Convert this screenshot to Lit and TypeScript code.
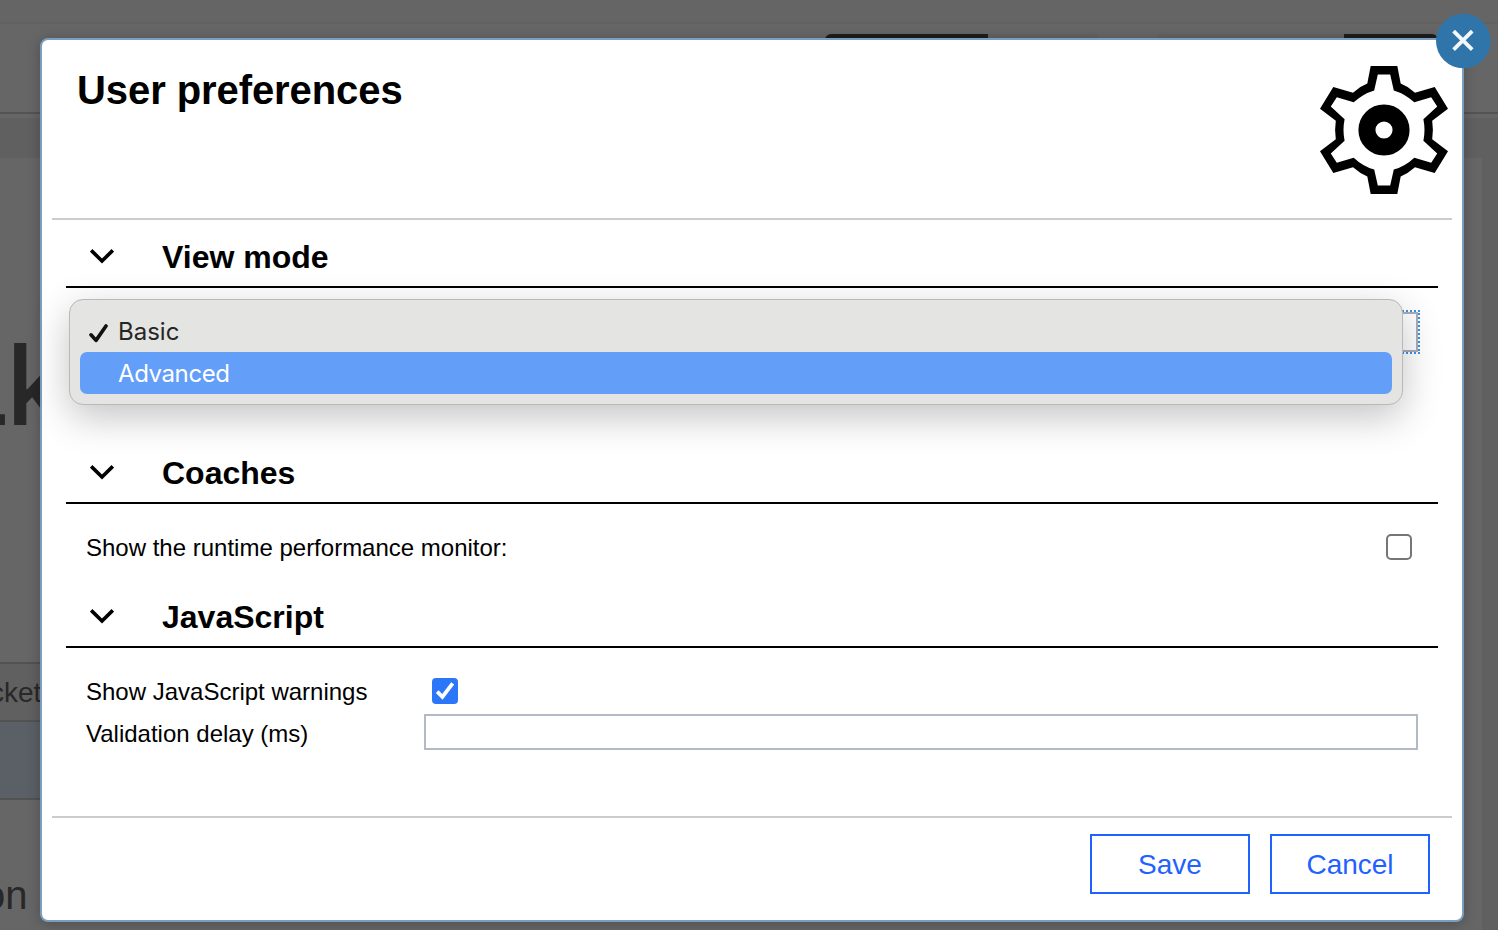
import { LitElement, html, css } from "lit";
import { customElement, property } from "lit/decorators.js";

@customElement("pref-section")
class PrefSection extends LitElement {
  @property() heading = "";

  static styles = css`
    :host { display: block; }
    .head {
      display: flex; align-items: center; box-sizing: border-box; height: 68px;
      margin: 0 24px; padding: 8px 0 0 24px; gap: 48px; border-bottom: 2px solid #000;
    }
    .chevron { width: 24px; height: 24px; display: block; margin-top: -2px; }
    .title { font: bold 32px/36px "Liberation Sans", Arial, sans-serif; letter-spacing: 0; margin: 0; color: #000; }
  `;

  render() {
    return html`
      <div class="head">
        <svg class="chevron" viewBox="0 0 24 24" fill="none" stroke="#000" stroke-width="3.6">
          <path d="M1.2 6.4 L12 17 L22.8 6.4" />
        </svg>
        <h2 class="title">${this.heading}</h2>
      </div>
      <slot></slot>
    `;
  }
}

@customElement("app-root")
class AppRoot extends LitElement {
  static styles = css`
    :host {
      display: grid; width: 1498px; height: 930px; overflow: hidden; position: relative;
      font-family: "Liberation Sans", Arial, sans-serif; color: #000; background: #666;
    }
    * { box-sizing: border-box; }
    .page, .dialog { grid-area: 1 / 1; }

    .page { display: flex; flex-direction: column; height: 930px; overflow: hidden; color: #282828; }
    .strip { height: 24px; flex: none; background: #656565; border-bottom: 2px solid #616161; }
    .toolbar { height: 90px; flex: none; display: flex; padding: 10px 0 0 825px; border-bottom: 2px solid #535358; }
    .tool { height: 30px; background: #1c1e1e; }
    .tool-a { width: 163px; border-radius: 6px 0 0 0; }
    .tool-b { width: 112px; background: #626262; border-radius: 0 6px 0 0; }
    .tool-c { width: 188px; margin-left: 56px; background: #626262; border-radius: 6px 0 0 0; }
    .tool-d { width: 94px; border-radius: 0 6px 0 0; }
    .band { height: 40px; flex: none; margin-top: 4px; background: #606060; }
    .main { flex: 1; display: flex; justify-content: space-between; }
    .left { width: 1400px; display: flex; flex-direction: column; }
    .gutter { width: 16px; background: #606060; }
    .hero { height: 504px; display: flex; padding-top: 167px; }
    .hero-text { font: 500 113px/118px Inter, sans-serif; letter-spacing: -4px; margin-left: -54px; white-space: nowrap; }
    .row-head {
      height: 60px; display: flex; align-items: center; background: #606060;
      border-top: 2px solid #525252; border-bottom: 2px solid #525252;
    }
    .row-text { font: 28px/36px "Liberation Sans", sans-serif; margin-left: -10px; padding-top: 1px; }
    .row-body { height: 78px; background: #5b6066; border-bottom: 2px solid #525252; }
    .tail { font: 40px/46px "Liberation Sans", sans-serif; margin: 72px 0 0 -17px; }

    .dialog {
      position: relative; z-index: 1; margin: 38px 0 0 40px; width: 1424px; height: 884px;
      background: #fff; border: 2px solid #7b9dbe; border-radius: 8px;
      box-shadow: 0 2px 14px rgba(0, 0, 0, 0.24);
      display: flex; flex-direction: column;
    }
    .header {
      height: 180px; flex: none; margin: 0 10px; padding: 26px 4px 0 25px;
      display: flex; justify-content: space-between; align-items: flex-start;
      border-bottom: 2px solid #ccc;
    }
    .heading { margin: 0; font-size: 40px; line-height: 48px; font-weight: bold; letter-spacing: -0.08px; }
    .gear { width: 128px; height: 128px; display: block; }

    .view-body { height: 148px; padding: 22px 42px 0 36px; }
    .select-ring { height: 44px; border: 2px dotted #3f92e0; }
    .select { height: 40px; border: 2px solid #a9aebb; background: #fff; }
    .coach-body { height: 76px; display: flex; justify-content: space-between; padding: 30px 50px 0 44px; }
    .js-body {
      height: 168px; display: grid; grid-template-columns: 338px 1fr; grid-auto-rows: 42px;
      padding: 24px 44px 0 44px;
    }
    .label { font-size: 24px; line-height: 28px; white-space: nowrap; }
    .js-body .label { padding-top: 6px; }
    .check { width: 26px; height: 26px; display: block; border: 2px solid #767676; border-radius: 5px; background: #fff; }
    .checked { width: 26px; height: 26px; display: block; margin: 6px 0 0 8px; }
    .field { height: 36px; border: 2px solid #b4b9c6; background: #fff; }

    .footer {
      flex: 1; margin: 0 10px; padding: 16px 22px 0 0; border-top: 2px solid #ccc;
      display: flex; justify-content: flex-end; align-items: flex-start; gap: 20px;
    }
    .btn {
      width: 160px; height: 60px; padding: 1px 0 0; border: 2px solid #1f62ff; background: #fff;
      color: #1f62ff; font: 28px/32px "Liberation Sans", Arial, sans-serif;
    }

    .close { position: absolute; z-index: 4; left: 1436px; top: 13px; width: 55px; height: 56px; }
    .menu {
      position: absolute; z-index: 3; left: 69px; top: 299px; width: 1334px; height: 106px;
      padding: 12px 10px 10px; border: 1px solid #b9b9b8; border-radius: 14px; background: #e4e4e2;
      box-shadow: 0 12px 38px rgba(0, 0, 0, 0.24);
      font-family: Inter, sans-serif; font-size: 24px; color: #262626;
    }
    .option { height: 42px; display: flex; align-items: center; padding-left: 8px; border-radius: 7px; }
    .option-basic { height: 40px; }
    .option-active { background: #639ef8; color: #fff; padding-top: 1px; letter-spacing: -0.4px; }
    .mark { width: 20px; height: 20px; margin: 2px 10px 0 0; flex: none; }
    .option-label { line-height: 30px; }
  `;

  render() {
    return html`
      <div class="page">
        <div class="strip"></div>
        <div class="toolbar">
          <div class="tool tool-a"></div><div class="tool tool-b"></div>
          <div class="tool tool-c"></div><div class="tool tool-d"></div>
        </div>
        <div class="band"></div>
        <div class="main">
          <div class="left">
            <div class="hero"><div class="hero-text">Lk</div></div>
            <div class="row-head"><span class="row-text">cket</span></div>
            <div class="row-body"></div>
            <div class="tail">on</div>
          </div>
          <div class="gutter"></div>
        </div>
      </div>

      <div class="dialog" role="dialog">
        <div class="header">
          <h1 class="heading">User preferences</h1>
          <svg class="gear" viewBox="0 0 32 32">
            <path fill-rule="evenodd" d="M12.67 0H19.33L20.17 4.4Q22 5.1 23.75 6.67L28.67 5.25L32 10.67L28.05 13.7Q28.4 16 28.05 18.3L32 21.33L28.67 26.75L23.75 25.33Q22 26.9 20.17 27.6L19.33 32H12.67L11.83 27.6Q10 26.9 8.25 25.33L3.33 26.75L0 21.33L3.95 18.3Q3.6 16 3.95 13.7L0 10.67L3.33 5.25L8.25 6.67Q10 5.1 11.83 4.4Z
              M14.45 2.1L13.55 6.1Q10.7 6.95 8.42 9.08L4.2 7.8L2.7 10.15L6.15 13.3Q5.6 16 6.15 18.7L2.7 21.85L4.2 24.2L8.42 22.92Q10.7 25.05 13.55 25.9L14.45 29.9H17.55L18.45 25.9Q21.3 25.05 23.58 22.92L27.8 24.2L29.3 21.85L25.85 18.7Q26.4 16 25.85 13.3L29.3 10.15L27.8 7.8L23.58 9.08Q21.3 6.95 18.45 6.1L17.55 2.1Z" />
            <circle cx="16" cy="16" r="4.27" fill="none" stroke="#000" stroke-width="4.25" />
          </svg>
        </div>

        <pref-section heading="View mode">
          <div class="view-body"><div class="select-ring"><div class="select"></div></div></div>
        </pref-section>
        <pref-section heading="Coaches">
          <div class="coach-body">
            <span class="label">Show the runtime performance monitor:</span>
            <span class="check"></span>
          </div>
        </pref-section>
        <pref-section heading="JavaScript">
          <div class="js-body">
            <span class="label">Show JavaScript warnings</span>
            <svg class="checked" viewBox="0 0 26 26">
              <rect width="26" height="26" rx="4" fill="#2b77f7" />
              <path d="M5.2 13.7L10.4 18.8L20.7 5.3" fill="none" stroke="#fff" stroke-width="3.8" />
            </svg>
            <span class="label">Validation delay (ms)</span>
            <div class="field"></div>
          </div>
        </pref-section>

        <div class="footer">
          <button class="btn">Save</button>
          <button class="btn">Cancel</button>
        </div>
      </div>

      <div class="menu">
        <div class="option option-basic">
          <svg class="mark" viewBox="0 0 20 20" fill="none" stroke="#111" stroke-width="3.6" stroke-linecap="round" stroke-linejoin="round">
            <path d="M3 11.8L8 17.4L18 3" />
          </svg>
          <span class="option-label">Basic</span>
        </div>
        <div class="option option-active">
          <span class="mark"></span>
          <span class="option-label">Advanced</span>
        </div>
      </div>

      <svg class="close" viewBox="0 0 55 56">
        <circle cx="27.3" cy="28" r="27.3" fill="#3075aa" />
        <path d="M17.6 18.2L36.2 36.7M36.2 18.2L17.6 36.7" stroke="#f4f8fb" stroke-width="3.8" fill="none" />
      </svg>
    `;
  }
}
